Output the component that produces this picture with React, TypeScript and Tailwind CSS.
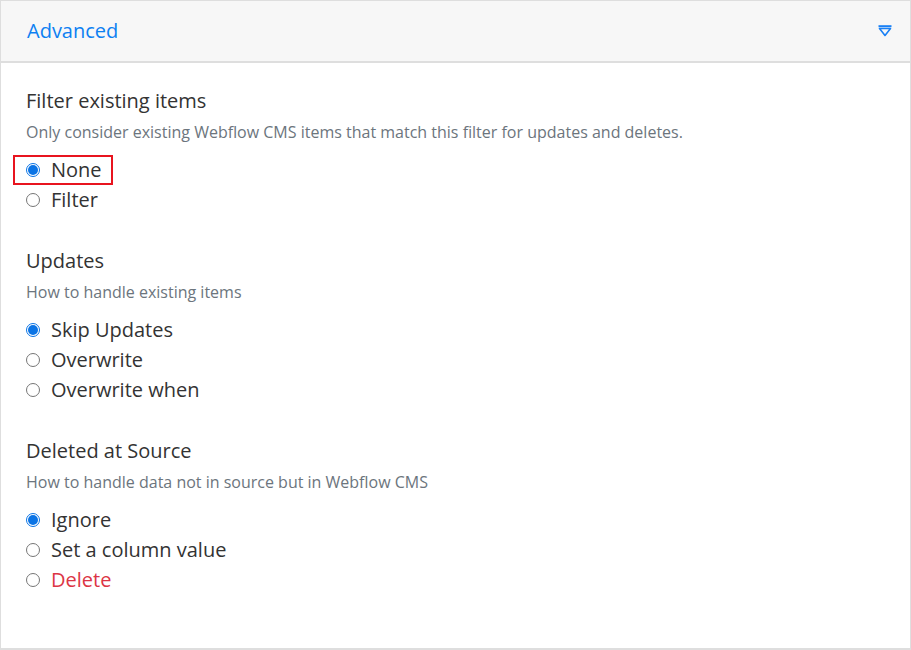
import { useState } from "react";

type Option = { value: string; label: string; danger?: boolean };

const SECTIONS: { key: string; title: string; hint: string; options: Option[]; initial: string }[] = [
  {
    key: "filter",
    title: "Filter existing items",
    hint: "Only consider existing Webflow CMS items that match this filter for updates and deletes.",
    options: [
      { value: "none", label: "None" },
      { value: "filter", label: "Filter" },
    ],
    initial: "none",
  },
  {
    key: "updates",
    title: "Updates",
    hint: "How to handle existing items",
    options: [
      { value: "skip", label: "Skip Updates" },
      { value: "overwrite", label: "Overwrite" },
      { value: "overwrite-when", label: "Overwrite when" },
    ],
    initial: "skip",
  },
  {
    key: "deleted",
    title: "Deleted at Source",
    hint: "How to handle data not in source but in Webflow CMS",
    options: [
      { value: "ignore", label: "Ignore" },
      { value: "column", label: "Set a column value" },
      { value: "delete", label: "Delete", danger: true },
    ],
    initial: "ignore",
  },
];

function Radio({ checked }: { checked: boolean }) {
  return (
    <span
      className={
        checked
          ? "flex h-[14px] w-[14px] shrink-0 items-center justify-center rounded-full border border-[#0b74e5] bg-white"
          : "flex h-[14px] w-[14px] shrink-0 items-center justify-center rounded-full border border-[#767676] bg-white"
      }
    >
      {checked && <span className="h-[10px] w-[10px] rounded-full bg-[#0b74e5]" />}
    </span>
  );
}

export default function App() {
  const [values, setValues] = useState<Record<string, string>>(
    Object.fromEntries(SECTIONS.map((s) => [s.key, s.initial]))
  );

  return (
    <div className="h-[650px] w-[911px] bg-white font-['Open_Sans',sans-serif]">
      <div className="flex h-[650px] flex-col border border-b-2 border-[#dedede]">
        <div className="flex h-[62px] shrink-0 items-center justify-between border-b-2 border-[#dedede] bg-[#f7f7f7] pl-[26px] pr-[18px]">
          <span className="text-[20px] text-[#0d80f2]">Advanced</span>
          <svg width="14" height="12" viewBox="0 0 14 12" fill="none">
            <path d="M0.5 1.2 H13.5" stroke="#1a80f5" strokeWidth="2" />
            <path d="M1.5 3.5 H12.5 L7 10.5 Z" stroke="#1a80f5" strokeWidth="1.6" strokeLinejoin="round" />
          </svg>
        </div>

        <div className="flex flex-col gap-[32px] px-[25px] pt-[24px]">
          {SECTIONS.map((section) => (
            <div key={section.key} className="flex flex-col">
              <div className="text-[20px] leading-[28px] text-[#333]">{section.title}</div>
              <div className="mt-[6px] text-[16px] leading-[22px] text-[#6c757d]">{section.hint}</div>
              <div className="mt-[12px] flex flex-col">
                {section.options.map((opt, i) => {
                  const checked = values[section.key] === opt.value;
                  const boxed = section.key === "filter" && i === 0;
                  return (
                    <label
                      key={opt.value}
                      className={
                        boxed
                          ? "-mx-[13px] flex h-[30px] w-fit cursor-pointer items-center gap-[11px] border-2 border-[#e8141f] pl-[11px] pr-[9px]"
                          : "flex h-[30px] cursor-pointer items-center gap-[11px]"
                      }
                      onClick={() => setValues((v) => ({ ...v, [section.key]: opt.value }))}
                    >
                      <Radio checked={checked} />
                      <span className={opt.danger ? "text-[20px] text-[#dc3545]" : "text-[20px] text-[#333]"}>
                        {opt.label}
                      </span>
                    </label>
                  );
                })}
              </div>
            </div>
          ))}
        </div>
      </div>
    </div>
  );
}
